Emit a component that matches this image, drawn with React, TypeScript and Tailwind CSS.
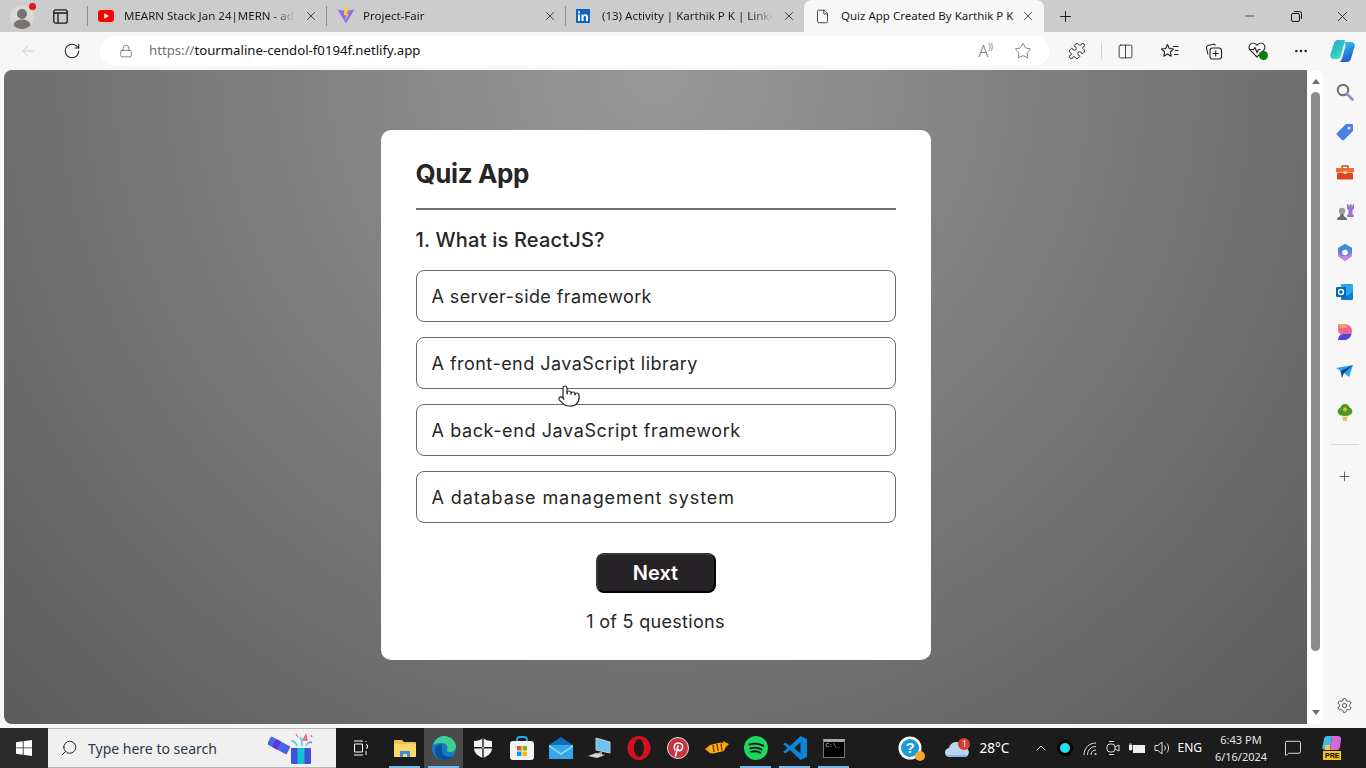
import { ReactNode } from "react";
import {
  ArrowLeft,
  ChevronUp,
  Columns2,
  File,
  Lock,
  MessageSquare,
  Minus,
  MoreHorizontal,
  Plus,
  Pointer,
  Puzzle,
  RotateCw,
  Search,
  Settings,
  Star,
  X,
} from "lucide-react";

const options = [
  { label: "A server-side framework", spacing: "tracking-[0.4px]" },
  { label: "A front-end JavaScript library", spacing: "tracking-[0.47px]" },
  { label: "A back-end JavaScript framework", spacing: "tracking-[0.6px]" },
  { label: "A database management system", spacing: "tracking-[0.9px]" },
];

const YoutubeIcon = () => (
  <svg width="16" height="12" viewBox="0 0 16 12">
    <rect width="16" height="12" rx="3" fill="#f00" />
    <path d="M6.3 3.2 11 6l-4.7 2.8z" fill="#fff" />
  </svg>
);

const ViteIcon = () => (
  <svg width="18" height="16" viewBox="0 0 18 16">
    <path d="M0.5 1.5 9 15.5 17.5 1.5 9 3z" fill="#8f6cf6" />
    <path d="M7 0.8 11.8 0 10 6l2-.5L8.5 12.5 9.2 7 7 7.5z" fill="#ffc928" />
  </svg>
);

const LinkedinIcon = () => (
  <svg width="14" height="14" viewBox="0 0 14 14">
    <rect width="14" height="14" rx="1" fill="#0a66c2" />
    <path d="M2 5.5h2V12H2zM2 2.2h2v2H2zM5.5 5.5h1.9v1c.4-.7 1.1-1.2 2.1-1.2 1.8 0 2.5 1.1 2.5 3V12h-2V8.6c0-.9-.3-1.5-1.1-1.5-.9 0-1.4.6-1.4 1.6V12h-2z" fill="#fff" />
  </svg>
);

const ProfileIcon = () => (
  <div className="relative w-[26px] h-[26px]">
    <svg width="24" height="24" viewBox="0 0 24 24" className="mt-[2px]">
      <circle cx="12" cy="12" r="12" fill="#dcd9d4" />
      <circle cx="12" cy="9" r="5" fill="#77736f" />
      <path d="M3.5 20c1-4 4.500-5.500 8.500-5.500s7.500 1.500 8.500 5.500c-2 2.500-5 4-8.500 4s-6.500-1.500-8.500-4z" fill="#77736f" />
    </svg>
    <span className="absolute right-0 top-0 w-[7px] h-[7px] rounded-full bg-[#e81123]" />
  </div>
);

const WorkspaceIcon = () => (
  <svg width="15" height="15" viewBox="0 0 15 15" fill="none" stroke="#1a1a1a" strokeWidth="1.3">
    <rect x="0.8" y="0.8" width="13.400" height="13.400" rx="2" />
    <path d="M0.8 4h13.400M5 4v10.200" />
  </svg>
);

const Tab = ({ icon, title, active }: { icon: ReactNode; title: string; active?: boolean }) => (
  <div
    className={
      active
        ? "flex items-center w-[240px] h-full -ml-px pl-[11px] pr-[9px] bg-[#f7f7f7] rounded-t-lg"
        : "flex items-center w-[239px] h-[20px] pl-[10px] pr-[8px] border-r border-[#8e8e8e]"
    }
  >
    <div className="w-[26px] flex items-center">{icon}</div>
    <span
      className={
        active
          ? "flex-1 min-w-0 whitespace-nowrap text-[11.5px] text-[#1c1c1c]"
          : "flex-1 min-w-0 overflow-hidden whitespace-nowrap text-[11.5px] text-[#1c1c1c] [mask-image:linear-gradient(to_right,black_88%,transparent)]"
      }
    >
      {title}
    </span>
    <X size={14} strokeWidth={1.4} className="ml-[9px] shrink-0 text-[#222]" />
  </div>
);

const TabStrip = () => (
  <div className="flex items-center h-8 bg-[#cccccc] shrink-0">
    <div className="flex items-center w-[88px] h-full pl-[10px]">
      <ProfileIcon />
      <div className="ml-[17px]">
        <WorkspaceIcon />
      </div>
      <div className="ml-[19px] w-px h-5 bg-[#8e8e8e]" />
    </div>
    <Tab icon={<YoutubeIcon />} title="MEARN Stack Jan 24|MERN - adoption" />
    <Tab icon={<ViteIcon />} title="Project-Fair" />
    <Tab icon={<LinkedinIcon />} title="(13) Activity | Karthik P K | LinkedIn" />
    <Tab active icon={<File size={15} strokeWidth={1.2} className="text-[#111]" />} title="Quiz App Created By Karthik P K" />
    <Plus size={17} strokeWidth={1.3} className="ml-[13px] text-[#111]" />
    <div className="flex items-center ml-auto text-[#111]">
      <Minus size={14} strokeWidth={1.1} className="mr-[34px]" />
      <svg width="11" height="11" viewBox="0 0 11 11" fill="none" stroke="#111" strokeWidth="1" className="mr-[32px]">
        <rect x="0.500" y="2.500" width="8" height="8" rx="1.500" />
        <path d="M3 0.500h5.500a2 2 0 0 1 2 2V8" />
      </svg>
      <X size={17} strokeWidth={1.1} className="mr-[15px]" />
    </div>
  </div>
);

const FavoritesIcon = () => (
  <svg width="18" height="17" viewBox="0 0 18 17" fill="none" stroke="#222" strokeWidth="1.100" strokeLinejoin="round">
    <path d="M6.500 1.500 8.300 5.500l4.200.5-3.100 2.900.8 4.300-3.700-2.100-3.700 2.100.8-4.300L.5 6l4.200-.5z" />
    <path d="M12 3.500h5.500M14 7.500h3.500M13 11.500h4.500" />
  </svg>
);

const CollectionsIcon = () => (
  <svg width="18" height="18" viewBox="0 0 18 18" fill="none" stroke="#222" strokeWidth="1.100">
    <path d="M3 12.500 1.500 6c-.3-1.200.3-2.200 1.500-2.500L8 2.200c1.200-.3 2 .3 2.400 1.300" />
    <rect x="5" y="6" width="11.500" height="11" rx="2.500" />
    <path d="M10.700 8.500v6M7.700 11.500h6" />
  </svg>
);

const HeartIcon = () => (
  <div className="relative w-5 h-[18px]">
    <svg width="18" height="16" viewBox="0 0 18 16" fill="none" stroke="#222" strokeWidth="1.100">
      <path d="M9 15 2.200 8.200C.5 6.300.7 3.600 2.500 2.100c1.900-1.500 4.700-1.100 6.500 1 1.800-2.100 4.600-2.500 6.500-1 1.800 1.500 2 4.200.3 6.100L9 15z" />
      <path d="M2 7.500h3.500l1.500-2 2 5 1.500-3h2" />
    </svg>
    <span className="absolute right-0 bottom-0 w-[9px] h-[9px] rounded-full bg-[#107c10]" />
  </div>
);

const CopilotIcon = () => (
  <svg width="25" height="24" viewBox="0 0 25 24">
    <defs>
      <linearGradient id="cpA" x1="0" y1="0" x2="0.600" y2="1">
        <stop offset="0" stopColor="#1c9fe0" />
        <stop offset="1" stopColor="#3ee0b0" />
      </linearGradient>
      <linearGradient id="cpB" x1="0.300" y1="0" x2="0.700" y2="1">
        <stop offset="0" stopColor="#38c6f0" />
        <stop offset="1" stopColor="#1d4fc8" />
      </linearGradient>
    </defs>
    <path d="M8 1h7L11 17c-.6 2-2 3-4 3H4c-3 0-4.300-2.300-3.500-5L4 4.500C4.700 2.200 6 1 8 1z" fill="url(#cpA)" />
    <path d="M13 3h8c3 0 4.300 2.300 3.500 5L21 19.500c-.7 2.300-2 3.500-4 3.500H9c1.500-.5 2.500-2 3-3.500L15.500 7c.3-1.500-1-3.500-2.500-4z" fill="url(#cpB)" />
  </svg>
);

const ToolBar = () => (
  <div className="flex items-center h-[38px] bg-[#f7f7f7] shrink-0 pl-[19px] text-[#222]">
    <ArrowLeft size={18} strokeWidth={1.1} className="text-[#c4c4c4]" />
    <RotateCw size={18} strokeWidth={1.4} className="ml-[26px]" />
    <div className="flex items-center ml-[19px] w-[949px] h-[30px] bg-white rounded-[15px] pl-[19px] pr-[17px]">
      <Lock size={14} strokeWidth={1.2} className="text-[#555]" />
      <span className="ml-[16px] text-[13.2px] text-[#111] font-['Noto_Sans',sans-serif]">
        <span className="text-[#6f6f6f]">https://</span>tourmaline-cendol-f0194f.netlify.app
      </span>
      <span className="ml-auto text-[16px] font-light text-[#777] leading-none">A</span>
      <span className="text-[8px] text-[#777] mb-2 mr-[21px]">))</span>
      <Star size={18} strokeWidth={1.1} className="text-[#666]" />
    </div>
    <Puzzle size={18} strokeWidth={1.3} className="ml-[19px]" />
    <div className="ml-[15px] w-px h-[16px] bg-[#d0d0d0]" />
    <Columns2 size={17} strokeWidth={1.2} className="ml-[15px]" />
    <div className="ml-[27px]">
      <FavoritesIcon />
    </div>
    <div className="ml-[26px]">
      <CollectionsIcon />
    </div>
    <div className="ml-[25px]">
      <HeartIcon />
    </div>
    <MoreHorizontal size={16} strokeWidth={1.8} className="ml-[25px]" />
    <div className="ml-[21px]">
      <CopilotIcon />
    </div>
  </div>
);

const QuizCard = () => (
  <div className="w-[550px] h-[530px] bg-white rounded-[10px] px-[35px] pt-[25px] text-[#262626] font-['Inter',sans-serif]">
    <h1 className="pt-px text-[26px] leading-[35px] font-bold tracking-[-0.4px]">Quiz App</h1>
    <hr className="mt-[17px] h-[2px] border-none bg-[#707070]" />
    <h2 className="mt-[16px] text-[20px] leading-[28px] font-medium tracking-[0.2px]">1. What is ReactJS?</h2>
    <ul className="mt-[16px] flex flex-col gap-[15px]">
      {options.map((option) => (
        <li
          key={option.label}
          className={`flex items-center h-[52px] pl-[15px] border border-[#686868] rounded-lg text-[18px] ${option.spacing}`}
        >
          {option.label}
        </li>
      ))}
    </ul>
    <button className="block mx-auto mt-[30px] w-[120px] h-[40px] rounded-lg border-2 border-[#3a373a] [border-style:outset] bg-[#262326] text-white text-[20px] font-semibold">
      Next
    </button>
    <p className="mt-[15px] text-center text-[18px] leading-[27px] tracking-[0.3px]">1 of 5 questions</p>
  </div>
);

const sideIcons: ReactNode[] = [
  <svg key="search" width="18" height="18" viewBox="0 0 18 18" fill="none">
    <circle cx="7" cy="7" r="5.200" stroke="#777" strokeWidth="2.200" />
    <path d="M11 11l5.500 5.500" stroke="#a87fd6" strokeWidth="2.600" strokeLinecap="round" />
  </svg>,
  <svg key="tag" width="18" height="18" viewBox="0 0 18 18">
    <path d="M10 1h6a1 1 0 0 1 1 1v6L8 17a1.500 1.500 0 0 1-2 0L1 12a1.500 1.500 0 0 1 0-2z" fill="#4d7fe8" />
    <circle cx="13" cy="5" r="1.500" fill="#dfe8fb" />
  </svg>,
  <svg key="tools" width="18" height="16" viewBox="0 0 18 16">
    <path d="M6 4V2h6v2" fill="none" stroke="#b5532a" strokeWidth="1.500" />
    <rect y="4" width="18" height="4.500" rx="1" fill="#ef6a2d" />
    <rect x="1" y="9" width="16" height="6.500" rx="1" fill="#d9481c" />
    <rect x="7.500" y="7" width="3" height="3" fill="#c9d3dc" />
  </svg>,
  <svg key="games" width="18" height="18" viewBox="0 0 18 18">
    <circle cx="6" cy="8" r="3.200" fill="#9a9a9a" />
    <path d="M1 17c0-2 1-3 3-3.500L4.500 11h3l.5 2.500c2 .5 3 1.500 3 3.500z" fill="#6b6b6b" />
    <path d="M11 1h1.500v1.500H14V1h1.500v1.500H17V1h1v5l-1.500 1v4l1.500 1.500V14h-7v-1.500L12.500 11V7L11 6z" fill="#9a78cf" />
  </svg>,
  <svg key="m365" width="16" height="17" viewBox="0 0 16 17">
    <path d="M8 0 15 4v8l-7 5-7-5V4z" fill="#7a7ae0" />
    <path d="M8 0 15 4v5l-4-2.500C9 5 6 5 4.500 7L1 9V4z" fill="#3c8fd8" />
    <path d="M1 9v3l7 5 7-5V9c-2 3-5 3-7 3s-5 0-7-3z" fill="#c389e8" />
    <circle cx="8" cy="8.500" r="2.800" fill="#fff" />
  </svg>,
  <svg key="outlook" width="17" height="16" viewBox="0 0 17 16">
    <rect x="5" y="0" width="12" height="14" rx="1" fill="#28a8ea" />
    <path d="M5 8l6 4 6-4v7a1 1 0 0 1-1 1H6a1 1 0 0 1-1-1z" fill="#0f78d4" />
    <rect y="3" width="10" height="10" rx="1.200" fill="#0364b8" />
    <circle cx="5" cy="8" r="2.500" fill="none" stroke="#fff" strokeWidth="1.400" />
  </svg>,
  <svg key="designer" width="16" height="18" viewBox="0 0 16 18">
    <path d="M1 1h6c5 0 8 3 8 7 0 1-.2 2-.6 3H5C2 11 1 9 1 6z" fill="#f0649a" />
    <path d="M1 1h5c2 0 4 1.500 4 4H4C2 5 1 3 1 1z" fill="#f5a35c" />
    <path d="M1 17c0-3 2-6 5-6h8.500c-1 4-4 6-8 6z" fill="#4a46d8" />
  </svg>,
  <svg key="send" width="17" height="14" viewBox="0 0 17 14">
    <path d="M0 3 17 0 13 12 8 8z" fill="#2aa3ec" />
    <path d="M4.500 6 17 0 8 8l-2 5z" fill="#14457f" />
  </svg>,
  <svg key="tree" width="16" height="19" viewBox="0 0 16 19">
    <path d="M8 1c3 0 4 2 4.500 3.500C15 5.500 16 8 15 10c-1 2-3 3-7 3s-6-1-7-3c-1-2 0-4.500 2.500-5.500C4 3 5 1 8 1z" fill="#4f9a1e" />
    <circle cx="8" cy="6.500" r="2" fill="#f2b632" />
    <path d="M5 13.500h6l-1 2.500v2H6v-2z" fill="#e7c25a" />
  </svg>,
];

const SideBar = () => (
  <div className="flex flex-col items-center w-[43px] shrink-0 bg-[#f7f7f7] pt-[2px] pb-[14px]">
    <div className="flex flex-col items-center w-full">
      {sideIcons.map((icon, i) => (
        <div key={i} className="flex items-center justify-center h-10 w-full">
          {icon}
        </div>
      ))}
    </div>
    <div className="mt-[12px] w-[28px] h-px bg-[#d9d9d9]" />
    <Plus size={15} strokeWidth={1.2} className="mt-[24px] text-[#333]" />
    <Settings size={17} strokeWidth={1.2} className="mt-auto text-[#333]" />
  </div>
);

const ScrollBar = () => (
  <div className="flex flex-col items-center w-[15px] shrink-0 bg-white rounded-r-lg pt-[9px] pb-[9px] ml-px">
    <span className="w-0 h-0 border-x-[4px] border-x-transparent border-b-[5px] border-b-[#6b6b6b]" />
    <span className="mt-[8px] w-[9px] h-[559px] rounded-full bg-[#8b8b8b]" />
    <span className="mt-auto w-0 h-0 border-x-[4px] border-x-transparent border-t-[5px] border-t-[#6b6b6b]" />
  </div>
);

const MainArea = () => (
  <div className="relative flex flex-1 min-h-0 bg-[#f7f7f7]">
    <div className="flex flex-1 min-w-0 pl-[4px] pb-[4px]">
      <main className="flex flex-1 justify-center pt-[60px] rounded-l-lg bg-[radial-gradient(ellipse_at_50%_0%,#989898_0%,#5c5c5c_100%)]">
        <QuizCard />
      </main>
      <ScrollBar />
    </div>
    <SideBar />
    {/* mouse cursor on top of the second option */}
    <Pointer
      size={24}
      strokeWidth={1.2}
      className="absolute left-[557px] top-[314px] text-[#222] fill-white"
    />
  </div>
);

const WindowsLogo = () => (
  <svg width="16" height="16" viewBox="0 0 16 16" fill="#fff">
    <path d="M0 2.300 6.800 1.300V7.500H0zM7.600 1.200 16 0V7.500H7.600zM0 8.300H6.800V14.700L0 13.700zM7.600 8.300H16V16L7.600 14.800z" />
  </svg>
);

const GiftIcon = () => (
  <svg width="46" height="34" viewBox="0 0 46 34">
    <rect x="23" y="17" width="20" height="16" rx="1" fill="#3f51d9" />
    <rect x="29.500" y="17" width="7" height="16" fill="#12c2d4" />
    <rect x="0" y="10" width="22" height="9" rx="1" fill="#4a62e8" transform="rotate(28 11 14)" />
    <rect x="6" y="10" width="5" height="9" fill="#6a2fd0" transform="rotate(28 11 14)" />
    <path d="M29 15c-1-3-3-5-6-5M34 15c0-4 0-6-2-9M38 15c1-3 3-4 6-4" fill="none" stroke="#3fd0e0" strokeWidth="1.400" />
    <path d="M35 9l3-5 1 5zM28 3l2 3M43 4l1 2M41 11l3 1" stroke="#ef4fa6" strokeWidth="1.300" fill="#f5b83d" />
  </svg>
);

const FolderIcon = () => (
  <svg width="22" height="18" viewBox="0 0 22 18">
    <path d="M0 2a1 1 0 0 1 1-1h7l2 2h11a1 1 0 0 1 1 1v13a1 1 0 0 1-1 1H1a1 1 0 0 1-1-1z" fill="#f3c24d" />
    <rect y="5" width="22" height="13" rx="1" fill="#fbd869" />
    <path d="M6 12h10v6h-3v-3H9v3H6z" fill="#3f8fd8" />
  </svg>
);

const EdgeIcon = () => (
  <svg width="24" height="24" viewBox="0 0 24 24">
    <circle cx="12" cy="12" r="12" fill="#1478c8" />
    <path d="M1 9C3 3 8 0 12 0c7 0 12 5 12 11 0 3-3 5-6 5-2 0-4-1-3-2 2-3-1-7-5-7-4 0-8 1-9 2z" fill="#3fcf8e" />
    <path d="M10 8c-4 0-7 3-7 7 0 5 5 9 10 9 3 0 6-1 8-4-3 1-7 1-9-1s-3-6-2-11z" fill="#0b4f95" />
  </svg>
);

const ShieldIcon = () => (
  <svg width="18" height="20" viewBox="0 0 18 20">
    <path d="M9 0c2 2 5 3 9 3v7c0 5-4 8-9 10-5-2-9-5-9-10V3c4 0 7-1 9-3z" fill="#f2f2f2" />
    <path d="M8.300 0v20h1.400V0zM0 9h18v1.400H0z" fill="#1c1c1c" />
  </svg>
);

const StoreIcon = () => (
  <svg width="24" height="24" viewBox="0 0 24 24">
    <path d="M7 6V4a3 3 0 0 1 3-3h4a3 3 0 0 1 3 3v2" fill="none" stroke="#28a8ea" strokeWidth="1.800" />
    <rect y="5" width="24" height="19" rx="3" fill="#f4f4f4" />
    <rect x="7" y="10" width="4.500" height="4.500" fill="#f25022" />
    <rect x="12.500" y="10" width="4.500" height="4.500" fill="#7fba00" />
    <rect x="7" y="15.500" width="4.500" height="4.500" fill="#00a4ef" />
    <rect x="12.500" y="15.500" width="4.500" height="4.500" fill="#ffb900" />
  </svg>
);

const MailIcon = () => (
  <svg width="24" height="22" viewBox="0 0 24 22">
    <path d="M0 8 12 0l12 8v2H0z" fill="#0f6cbd" />
    <rect y="8" width="24" height="14" fill="#35a8ea" />
    <path d="M0 8l12 8 12-8v2L12 18 0 10z" fill="#8fd6f7" />
  </svg>
);

const PcIcon = () => (
  <svg width="24" height="22" viewBox="0 0 24 22">
    <path d="M8 1l14 4v11L8 13z" fill="#6fc3f2" stroke="#c8c8c8" />
    <path d="M14 14v4l-8 0z" fill="#9a9a9a" />
    <path d="M0 19l8-3 9 2-8 3z" fill="#d4d4d4" />
  </svg>
);

const OperaIcon = () => (
  <svg width="24" height="24" viewBox="0 0 24 24">
    <ellipse cx="12" cy="12" rx="11.500" ry="12" fill="#d8101e" />
    <ellipse cx="12" cy="12" rx="5" ry="9" fill="#1c1c1c" />
  </svg>
);

const PinterestIcon = () => (
  <svg width="22" height="22" viewBox="0 0 22 22">
    <circle cx="11" cy="11" r="10.500" fill="#c8343c" stroke="#e0e0e0" strokeWidth="1" />
    <path d="M8 13c-1.500-2-1-7 3.500-7 3 0 4.500 2 4 4.500S13.500 14 12 13.500c-.8-.3-1-1-1-1M11 9l-2.500 10" fill="none" stroke="#fff" strokeWidth="1.600" strokeLinecap="round" />
  </svg>
);

const CandyIcon = () => (
  <svg width="24" height="14" viewBox="0 0 24 14">
    <path d="M0 8l5-4 1 9zM24 3l-5 5-1-8z" fill="#f59e0b" />
    <rect x="4" y="2.500" width="16" height="9" rx="4" fill="#f7b313" transform="rotate(-12 12 7)" />
    <path d="M8 4l1 7M12 3l1 7M16 2.500l1 7" stroke="#8a3208" strokeWidth="1.500" />
  </svg>
);

const SpotifyIcon = () => (
  <svg width="24" height="24" viewBox="0 0 24 24">
    <circle cx="12" cy="12" r="12" fill="#1ed760" />
    <path d="M5.500 8.500c4.500-1.300 9.500-1 13.500 1.200M6.300 12.300c3.700-1 8-.7 11.200 1.200M7 15.800c3-.8 6.500-.5 9.300 1" fill="none" stroke="#121212" strokeWidth="1.900" strokeLinecap="round" />
  </svg>
);

const VsCodeIcon = () => (
  <svg width="24" height="24" viewBox="0 0 24 24">
    <path d="M17.500 0 24 3v18l-6.500 3L7 14l-4.500 3.500L0 16l4.500-4L0 8l2.500-1.500L7 10zM17.500 6.500 11 12l6.500 5.500z" fill="#0a84d6" />
  </svg>
);

const TerminalIcon = () => (
  <div className="w-[22px] h-[19px] bg-black border border-[#777] border-t-[3px] border-t-[#a8a8a8] pl-[2px] pt-[1px] text-[6px] leading-none text-[#ddd] font-['Liberation_Mono',monospace]">
    C:\_
  </div>
);

const taskIcons: { id: string; icon: ReactNode; open?: boolean; active?: boolean }[] = [
  { id: "files", icon: <FolderIcon />, open: true },
  { id: "edge", icon: <EdgeIcon />, open: true, active: true },
  { id: "shield", icon: <ShieldIcon /> },
  { id: "store", icon: <StoreIcon /> },
  { id: "mail", icon: <MailIcon /> },
  { id: "pc", icon: <PcIcon /> },
  { id: "opera", icon: <OperaIcon /> },
  { id: "pinterest", icon: <PinterestIcon /> },
  { id: "candy", icon: <CandyIcon /> },
  { id: "spotify", icon: <SpotifyIcon />, open: true },
  { id: "vscode", icon: <VsCodeIcon />, open: true },
  { id: "terminal", icon: <TerminalIcon />, open: true },
];

const HelpIcon = () => (
  <div className="relative w-[24px] h-[24px]">
    <svg width="24" height="24" viewBox="0 0 24 24">
      <circle cx="12" cy="12" r="11.500" fill="#fff" />
      <circle cx="12" cy="12" r="9" fill="#1b9ad6" />
      <text x="12" y="17" textAnchor="middle" fontSize="15" fontWeight="700" fill="#fff" fontFamily="Liberation Sans">?</text>
    </svg>
    <span className="absolute right-[-3px] bottom-[-1px] w-[10px] h-[10px] rounded-full bg-[#f0a92c]" />
  </div>
);

const WeatherIcon = () => (
  <div className="relative w-[25px] h-[24px]">
    <svg width="25" height="20" viewBox="0 0 25 20" className="mt-[4px]">
      <path d="M5 19a4.500 4.500 0 0 1-1-9c1-3.500 3.500-6 7-6 4 0 6.500 2.500 7 5.500a4.800 4.800 0 0 1 2 9.500z" fill="#b9d4f0" />
      <path d="M3 17h20c-1 1.500-2 2-3 2H5c-1 0-1.500-.5-2-2z" fill="#8fb6e2" />
    </svg>
    <span className="absolute right-0 top-0 flex items-center justify-center w-[12px] h-[12px] rounded-full bg-[#d83b2f] text-[8px] text-white">
      1
    </span>
  </div>
);

const CopilotPreIcon = () => (
  <div className="relative w-[22px] h-[24px]">
    <svg width="20" height="18" viewBox="0 0 20 18">
      <path d="M5 0h5L8 14H3c-2 0-3-1.500-2.500-3.500L2 3c.4-2 1.500-3 3-3z" fill="#3fb8e8" />
      <path d="M10 0h6c2 0 3.500 1.500 3 3.500L18 11c-.4 2-1.500 3-3 3H8z" fill="#d56ad8" />
      <path d="M3 9h5v5H3z" fill="#f5c242" />
    </svg>
    <span className="absolute left-[1px] bottom-0 px-[2px] bg-[#f5c518] text-[7px] leading-[9px] font-bold text-black font-['Liberation_Sans',sans-serif]">
      PRE
    </span>
  </div>
);

const TaskBar = () => (
  <footer className="flex items-center h-10 shrink-0 bg-[#1c1c1c] text-white font-['Noto_Sans',sans-serif]">
    <div className="flex items-center justify-center w-[48px] h-full bg-[#2b2b2b]">
      <WindowsLogo />
    </div>
    <div className="flex items-center w-[288px] h-full bg-[#f0f0f0] border-y border-[#b5b5b5] pl-[12px] text-[#1f2937]">
      <Search size={18} strokeWidth={1.3} className="-scale-x-100 text-[#222]" />
      <span className="ml-[10px] text-[14px] text-[#2b3a4a]">Type here to search</span>
      <div className="ml-auto mr-[22px]">
        <GiftIcon />
      </div>
    </div>
    <div className="flex items-center justify-center w-[49px] h-full">
      <svg width="16" height="16" viewBox="0 0 16 16" fill="none" stroke="#fff" strokeWidth="1">
        <path d="M1 1h9M1 15h9M1.500 4h8v8h-8zM13 1v1M13 5h1.500v3H13M13 11v4" />
      </svg>
    </div>
    {taskIcons.map((item) => (
      <div
        key={item.id}
        className={`relative flex items-center justify-center w-[39px] h-full ${item.active ? "bg-[#4a4a4a]" : ""}`}
      >
        {item.icon}
        {item.open && <span className="absolute bottom-0 inset-x-[4px] h-[2px] bg-[#76b9ed]" />}
      </div>
    ))}
    <div className="flex items-center ml-auto h-full">
      <HelpIcon />
      <div className="ml-[23px]">
        <WeatherIcon />
      </div>
      <span className="ml-[9px] w-[32px] text-[13.5px]">28°C</span>
      <ChevronUp size={16} strokeWidth={1.3} className="ml-[22px]" />
      <span className="ml-[11px] w-[10px] h-[10px] rounded-full bg-[#19e3ee] ring-[3px] ring-black" />
      {/* wifi arcs lean to the left with the dot at the lower right */}
      <svg width="15" height="15" viewBox="0 0 15 15" fill="none" stroke="#ddd" strokeWidth="1" className="ml-[13px]">
        <path d="M1 14C1 7 6 2 13 2M4.500 14c0-5 3.500-8.500 8.500-8.500M8 14c0-3 2-5 5-5" />
        <circle cx="12.500" cy="13" r="1" fill="#ddd" stroke="none" />
      </svg>
      <svg width="14" height="16" viewBox="0 0 14 16" fill="none" stroke="#ddd" strokeWidth="1" className="ml-[8px]">
        <rect x="1" y="4" width="8" height="8" rx="3" />
        <path d="M9 7l4-2v6l-4-2M3 1.500h5M3 14.500h5" />
      </svg>
      <svg width="17" height="11" viewBox="0 0 17 11" className="ml-[9px]">
        <rect x="4" y="2" width="12" height="8" fill="#eee" />
        <path d="M0 2h3v5H0zM1 0v2M2 0v2" fill="#eee" stroke="#eee" strokeWidth="0.500" />
      </svg>
      <svg width="17" height="16" viewBox="0 0 17 16" fill="none" stroke="#ddd" strokeWidth="1" className="ml-[8px]">
        <path d="M1 5.500h3L8 2v12l-4-3.500H1zM10.500 5.500c1 1.500 1 3.500 0 5M13 3.500c2 2.500 2 6.500 0 9" />
      </svg>
      <span className="ml-[6px] text-[12px]">ENG</span>
      <div className="flex flex-col items-center ml-[12px] w-[54px] text-[11px] leading-[17px] text-[#e5e5e5]">
        <span className="whitespace-nowrap">6:43 PM</span>
        <span>6/16/2024</span>
      </div>
      <MessageSquare size={18} strokeWidth={1.1} className="ml-[16px]" />
      <div className="ml-[20px] mr-[22px]">
        <CopilotPreIcon />
      </div>
    </div>
  </footer>
);

const App = () => {
  return (
    <div className="flex flex-col w-full h-screen overflow-hidden font-['Noto_Sans',sans-serif]">
      <TabStrip />
      <ToolBar />
      <MainArea />
      <TaskBar />
    </div>
  );
};

export default App;
